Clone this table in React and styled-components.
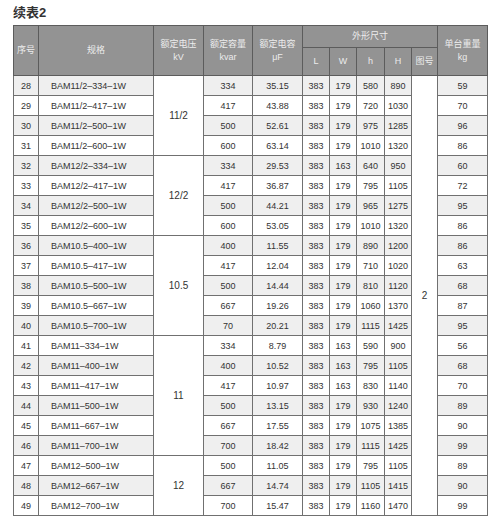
import React from 'react';
import styled, { createGlobalStyle } from 'styled-components';

const GlobalStyle = createGlobalStyle`
  body {
    margin: 0;
    background: #ffffff;
    font-family: "Liberation Sans", "Noto Sans CJK SC", Arial, sans-serif;
  }
`;

const Page = styled.div`
  width: 500px;
  height: 526px;
  padding: 5px 13px 0 13px;
  box-sizing: border-box;
  background: #fff;
`;

const Title = styled.div`
  font-size: 13px;
  font-weight: bold;
  color: #333;
  height: 20px;
  line-height: 15px;
`;

const Table = styled.table`
  width: 474px;
  border-collapse: collapse;
  table-layout: fixed;
  border: 1px solid #666;
  font-size: 9px;
  color: #333;
`;

const Th = styled.th`
  background: #939393;
  color: #ececec;
  font-weight: normal;
  border: 1px solid #5c5c5c;
  height: ${p => p.h || 20}px;
  padding: 0;
  line-height: 13px;
  text-align: center;
  font-size: 9px;
`;

const Td = styled.td`
  border: 1px solid #707070;
  height: 19px;
  padding: 0;
  text-align: ${p => (p.left ? 'left' : 'center')};
  padding-left: ${p => (p.left ? '12px' : '0')};
  background: ${p => (p.shade ? '#efefef' : '#fff')};
  white-space: nowrap;
`;

const MergedTd = styled(Td)`
  background: #fff;
  font-size: 10px;
`;

const widths = [25, 115, 50, 49, 50, 27, 27, 28, 27, 26, 50];

const rows = [
  [28, 'BAM11/2–334–1W', 334, '35.15', 383, 179, 580, 890, 59],
  [29, 'BAM11/2–417–1W', 417, '43.88', 383, 179, 720, 1030, 70],
  [30, 'BAM11/2–500–1W', 500, '52.61', 383, 179, 975, 1285, 96],
  [31, 'BAM11/2–600–1W', 600, '63.14', 383, 179, 1010, 1320, 86],
  [32, 'BAM12/2–334–1W', 334, '29.53', 383, 163, 640, 950, 60],
  [33, 'BAM12/2–417–1W', 417, '36.87', 383, 179, 795, 1105, 72],
  [34, 'BAM12/2–500–1W', 500, '44.21', 383, 179, 965, 1275, 95],
  [35, 'BAM12/2–600–1W', 600, '53.05', 383, 179, 1010, 1320, 86],
  [36, 'BAM10.5–400–1W', 400, '11.55', 383, 179, 890, 1200, 86],
  [37, 'BAM10.5–417–1W', 417, '12.04', 383, 179, 710, 1020, 63],
  [38, 'BAM10.5–500–1W', 500, '14.44', 383, 179, 810, 1120, 68],
  [39, 'BAM10.5–667–1W', 667, '19.26', 383, 179, 1060, 1370, 87],
  [40, 'BAM10.5–700–1W', 70, '20.21', 383, 179, 1115, 1425, 95],
  [41, 'BAM11–334–1W', 334, '8.79', 383, 163, 590, 900, 56],
  [42, 'BAM11–400–1W', 400, '10.52', 383, 163, 795, 1105, 68],
  [43, 'BAM11–417–1W', 417, '10.97', 383, 163, 830, 1140, 70],
  [44, 'BAM11–500–1W', 500, '13.15', 383, 179, 930, 1240, 89],
  [45, 'BAM11–667–1W', 667, '17.55', 383, 179, 1075, 1385, 90],
  [46, 'BAM11–700–1W', 700, '18.42', 383, 179, 1115, 1425, 99],
  [47, 'BAM12–500–1W', 500, '11.05', 383, 179, 795, 1105, 89],
  [48, 'BAM12–667–1W', 667, '14.74', 383, 179, 1105, 1415, 90],
  [49, 'BAM12–700–1W', 700, '15.47', 383, 179, 1160, 1470, 99],
];

// voltage groups: first row number -> [label, rowspan]
const groups = {
  28: ['11/2', 4],
  32: ['12/2', 4],
  36: ['10.5', 5],
  41: ['11', 6],
  47: ['12', 3],
};

export default function App() {
  return (
    <Page>
      <GlobalStyle />
      <Title>续表2</Title>
      <Table>
        <colgroup>
          {widths.map((w, i) => <col key={i} style={{ width: w }} />)}
        </colgroup>
        <thead>
          <tr>
            <Th rowSpan={2}>序号</Th>
            <Th rowSpan={2}>规格</Th>
            <Th rowSpan={2}>额定电压<br />kV</Th>
            <Th rowSpan={2}>额定容量<br />kvar</Th>
            <Th rowSpan={2}>额定电容<br />μF</Th>
            <Th colSpan={5} h={21}>外形尺寸</Th>
            <Th rowSpan={2}>单台重量<br />kg</Th>
          </tr>
          <tr>
            <Th h={27}>L</Th>
            <Th h={27}>W</Th>
            <Th h={27}>h</Th>
            <Th h={27}>H</Th>
            <Th h={27}>图号</Th>
          </tr>
        </thead>
        <tbody>
          {rows.map((r, i) => {
            const [no, spec, kvar, uf, L, W, h, H, kg] = r;
            const shade = no % 2 === 0;
            const g = groups[no];
            return (
              <tr key={no}>
                <Td shade={shade}>{no}</Td>
                <Td shade={shade} left>{spec}</Td>
                {g && <MergedTd rowSpan={g[1]}>{g[0]}</MergedTd>}
                <Td shade={shade}>{kvar}</Td>
                <Td shade={shade}>{uf}</Td>
                <Td shade={shade}>{L}</Td>
                <Td shade={shade}>{W}</Td>
                <Td shade={shade}>{h}</Td>
                <Td shade={shade}>{H}</Td>
                {i === 0 && <MergedTd rowSpan={rows.length}>2</MergedTd>}
                <Td shade={shade}>{kg}</Td>
              </tr>
            );
          })}
        </tbody>
      </Table>
    </Page>
  );
}
